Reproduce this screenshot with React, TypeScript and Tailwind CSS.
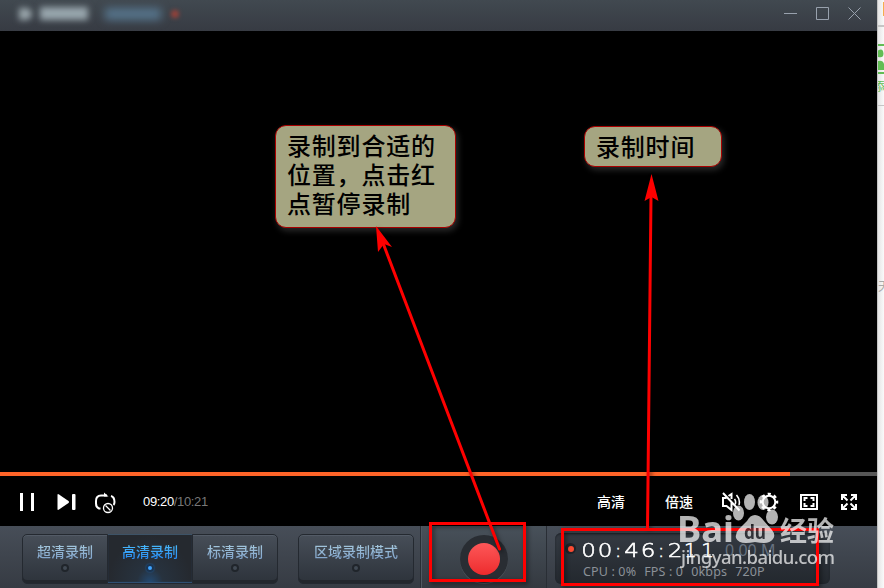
import { ReactNode } from 'react'
import { clsx } from 'clsx'

type ModeButtonProps = {
  label: string
  active?: boolean
  className?: string
}

const ModeButton = ({ label, active, className }: ModeButtonProps) => {
  return (
    <button
      className={clsx(
        'flex h-[50px] flex-col items-center border border-[#242930] pt-[8px] text-[14px] leading-[18px]',
        active
          ? 'border-t-[#3d5367] bg-[radial-gradient(ellipse_at_bottom,#234a73_0%,#27323e_22%,#25292f_70%)] shadow-[inset_0_-1px_1px_#31547a]'
          : 'bg-linear-to-b from-[#474e58] to-[#2d333b] shadow-[inset_0_1px_0_#535b66,inset_0_-3px_0_#23272d]',
        className,
      )}
    >
      <span
        className={clsx(
          'bg-linear-to-b bg-clip-text font-medium text-transparent',
          active
            ? 'from-[#4fc0fb] to-[#2483f2]'
            : 'from-[#a9ccdf] to-[#7c9fc9]',
        )}
      >
        {label}
      </span>
      <span
        className={clsx(
          'mt-[3px] size-[8px] rounded-full border-2',
          active
            ? 'border-[#1b3450] bg-[#3fa4ff] shadow-[0_0_2px_#235f9e]'
            : 'border-[#20252b] bg-[#414a54]',
        )}
      />
    </button>
  )
}

const TitleBar = () => {
  return (
    <header className="flex h-[31px] shrink-0 items-center justify-between bg-linear-to-b from-[#414950] to-[#373b43] pr-[15px] pb-[4px]">
      <div className="flex items-center pl-[19px]">
        <span className="h-[12px] w-[13px] rounded-r-full bg-[#98a4aa] blur-[3px]" />
        <span className="ml-[8px] h-[13px] w-[48px] bg-[#97a5ac] blur-[3px]" />
        <span className="ml-[17px] h-[12px] w-[56px] bg-[#55738a] blur-[4px]" />
        <span className="ml-[10px] size-[8px] rounded-full bg-[#974139] blur-[2px]" />
      </div>
      <svg width="78" height="14" fill="none" stroke="#98a1ad">
        <path d="M0 6.500h13M32.500.500h12v12h-12zM64.500.500l12 12M76.500.500l-12 12" />
      </svg>
    </header>
  )
}

type CalloutProps = {
  children: ReactNode
  className?: string
}

const Callout = ({ children, className }: CalloutProps) => {
  return (
    <div
      className={clsx(
        'absolute rounded-[11px] border border-[#a80000] bg-[#a5a581] pl-[11px] text-[24px] leading-[29px] font-medium tracking-[0.8px] text-black shadow-[2px_3px_6px_#2a2a2a]',
        className,
      )}
    >
      {children}
    </div>
  )
}

const PlayerControls = () => {
  return (
    <div className="flex h-[50px] items-center bg-black px-[20px] pt-[2px] text-white">
      <svg width="14" height="18" fill="currentColor">
        <path d="M0 0h3v18H0zM11 0h3v18h-3z" />
      </svg>
      <svg width="19" height="18" fill="currentColor" className="ml-[23px]">
        <path d="M.5 2Q.5.500 2 1.500l9.500 6.500q1 1 0 2L2 16.500Q.5 17.500.5 16z" />
        <rect x="15" y="1" width="3.500" height="16" rx="1" />
      </svg>
      <svg
        width="22"
        height="22"
        fill="none"
        stroke="currentColor"
        strokeWidth="2"
        className="mt-[2px] ml-[19px]"
      >
        <path d="M5.500 16.500H4q-3-1-3-5V9q0-5.500 5-5.500h6M16 4q3.500 1 3.500 6 0 2-1 3" />
        <path d="M9 .500 13.500 4.500H9z" fill="currentColor" stroke="none" />
        <circle cx="13" cy="16" r="4.500" strokeWidth="1.300" />
        <path d="m10.500 13.500 5 5" strokeWidth="1.300" />
      </svg>
      <span className="ml-[26px] font-['Liberation_Sans'] text-[13px] tracking-[-0.35px]">
        09:20<span className="text-[#777]">/10:21</span>
      </span>

      <div className="ml-auto flex items-center text-[14px]">
        <span className="font-medium">高清</span>
        <span className="ml-[40px] font-medium">倍速</span>
        <svg
          width="19"
          height="20"
          fill="none"
          stroke="currentColor"
          strokeWidth="2"
          className="ml-[29px]"
        >
          <path d="M4.500 6H1v8h3.500l5 4v-8M6.500 4l3-2v5M1 1l16.500 17.500" />
          <path d="M12.500 7q2 2.500.5 5.500M14.500 3q4 4.500 2.500 10" strokeWidth="1.600" />
        </svg>
        <svg
          width="20"
          height="20"
          viewBox="0 0 20 20"
          fill="none"
          stroke="currentColor"
          className="ml-[18px]"
        >
          <circle cx="10" cy="10" r="6.300" strokeWidth="2" />
          <circle
            cx="10"
            cy="10"
            r="8"
            strokeWidth="2.500"
            strokeDasharray="3.142"
            strokeDashoffset="1.571"
          />
        </svg>
        <svg
          width="18"
          height="16"
          fill="none"
          stroke="currentColor"
          strokeWidth="2"
          className="ml-[21px]"
        >
          <path d="M1 1h16v14H1zM4.500 7V4h3M10.500 4h3v3M13.500 9v3h-3M7.500 12h-3V9" />
        </svg>
        <svg
          width="16"
          height="16"
          fill="none"
          stroke="currentColor"
          strokeWidth="2"
          className="ml-[23px]"
        >
          <path d="M1 6V1h5M1 1l5.500 5.500M10 1h5v5M15 1 9.500 6.500M1 10v5h5M1 15l5.500-5.500M15 10v5h-5M15 15 9.500 9.500" />
        </svg>
      </div>
    </div>
  )
}

const RecordStatus = () => {
  return (
    <div className="ml-[8px] flex h-[51px] w-[275px] rounded-[6px] bg-linear-to-b from-[#343a42] to-[#23282e] pl-[10px] font-['Noto_Sans'] shadow-[inset_0_1px_2px_#1d2228]">
      <span className="mt-[10px] flex size-[11px] items-center justify-center rounded-full bg-[#202329]">
        <span className="size-[6px] rounded-full bg-[#fb4b32]" />
      </span>
      <div className="ml-[4px] flex flex-col">
        <div className="flex h-[30px] items-end">
          <div className="flex font-['DejaVu_Sans'] text-[20px] leading-[26px] font-extralight text-white [-webkit-text-stroke:0.6px_#fff]">
            <span className="w-[17px] scale-x-115 text-center">0</span>
            <span className="w-[16px] scale-x-115 text-center">0</span>
            <span className="w-[10px] text-center">:</span>
            <span className="w-[17px] scale-x-115 text-center">4</span>
            <span className="w-[16px] scale-x-115 text-center">6</span>
            <span className="w-[10px] text-center">:</span>
            <span className="w-[18px] scale-x-115 text-center">2</span>
            <span className="w-[10px] text-center">1</span>
            <span className="w-[27px] text-center">1</span>
          </div>
          <span className="ml-[4px] text-[16px] leading-[25px] text-[#66717f]">
            0.00 M
          </span>
        </div>
        <div className="flex gap-[8px] pl-[3px] text-[12.500px] leading-[17px] tracking-[0.15px] text-[#8b9198]">
          <span>CPU : 0%</span>
          <span>FPS : 0</span>
          <span>0kbps</span>
          <span>720P</span>
        </div>
      </div>
    </div>
  )
}

const RecorderBar = () => {
  return (
    <footer className="flex h-[62px] items-start bg-linear-to-b from-[#474e58] to-[#363b43] pl-[22px]">
      <div className="mt-[8px] flex">
        <ModeButton label="超清录制" className="w-[86px] rounded-l-[5px]" />
        <ModeButton label="高清录制" className="w-[84px] border-x-0" active />
        <ModeButton label="标清录制" className="w-[86px] rounded-r-[5px]" />
      </div>
      <ModeButton
        label="区域录制模式"
        className="mt-[8px] ml-[20px] w-[116px] rounded-[5px]"
      />
      <div className="ml-[6px] flex h-full w-[127px] justify-center border-x border-[#292e35] bg-linear-to-b from-[#48515a] to-[#343940] pt-[9px] shadow-[inset_1px_0_0_#505861]">
        <span className="flex size-[48px] items-center justify-center rounded-full bg-[#292d33] shadow-[0_1px_0_#4d545c]">
          <span className="size-[32px] rounded-full bg-linear-to-b from-[#fd5658] to-[#ed292c]" />
        </span>
      </div>
      <div className="pt-[7px]">
        <RecordStatus />
      </div>
    </footer>
  )
}

// strip of the page that stays visible behind the player window
const BackgroundPage = () => {
  return (
    <aside className="flex w-[7px] flex-col overflow-hidden border-l border-[#c4c4c4] bg-linear-to-r from-[#e5e5e5] to-[#fafafa]">
      <div className="flex h-[27px] shrink-0 items-start justify-end border-b-2 border-[#c5c5c5] pt-[2px]">
        <span className="h-[14px] w-px bg-[#f5ad4e]" />
      </div>
      <svg width="6" height="30" fill="#62bd54" className="mt-[17px] shrink-0">
        <path d="M0 0h6v2H0zM0 28h6v2H0zM0 6.500q5-3 5.500 3 0 5-5.500 3.500zM0 17q5-1 6 3v6H0z" />
      </svg>
      <div className="mt-[6px] -ml-[5px] h-[26px] w-[12px] shrink-0 border-b border-[#c5c5c5] text-[12px] leading-[14px] text-[#62bd54]">
        添
      </div>
      <div className="mt-[174px] w-[12px] shrink-0 text-[12px] leading-[14px] text-[#aaa]">
        天
      </div>
    </aside>
  )
}

const Annotations = () => {
  return (
    <svg
      width="884"
      height="588"
      fill="none"
      className="pointer-events-none absolute inset-0"
    >
      <g
        stroke="#f00"
        strokeWidth="3"
        className="drop-shadow-[2px_2px_2px_rgba(0,0,0,0.5)]"
      >
        <rect x="430.500" y="523.500" width="94" height="57" />
        <rect x="562.500" y="529.500" width="255" height="55" />
        <path d="M499.500 549 383 243M647.500 529 651 196" strokeLinecap="round" />
        <path
          d="m376 226 16 21-8-3-6 8zM651.500 174l7 27-7-4-7 4z"
          fill="#f00"
          stroke="none"
        />
      </g>
    </svg>
  )
}

const Watermark = () => {
  return (
    <svg
      width="884"
      height="588"
      fill="#fff"
      className="pointer-events-none absolute inset-0 opacity-70"
    >
      <text
        x="677"
        y="542"
        fontFamily="Noto Sans, sans-serif"
        fontWeight="700"
        fontSize="35"
        textLength="57"
        lengthAdjust="spacingAndGlyphs"
      >
        Bai
      </text>
      <ellipse cx="738.500" cy="513" rx="5.500" ry="7.500" />
      <ellipse cx="749.500" cy="502" rx="5.500" ry="8" />
      <ellipse cx="763" cy="502.500" rx="5.500" ry="7.500" />
      <ellipse cx="772" cy="517" rx="6" ry="7.500" />
      <path d="M755 515q5 0 9 6l8 9q4 5 1 9-3 4-9 4-4 0-9-1-5 1-9 1-8 0-10-5-1-5 3-9l8-8q3-6 8-6z" />
      <text
        x="744"
        y="539"
        fill="#34343a"
        fontFamily="Noto Sans, sans-serif"
        fontWeight="700"
        fontSize="20"
        textLength="22"
        lengthAdjust="spacingAndGlyphs"
      >
        du
      </text>
      <text
        x="780"
        y="541"
        fontFamily="Noto Sans CJK SC, sans-serif"
        fontWeight="700"
        fontSize="27"
        textLength="54"
      >
        经验
      </text>
      <text
        x="681"
        y="564"
        fontFamily="Noto Sans, sans-serif"
        fontSize="18.500"
        fontWeight="500"
        textLength="154"
      >
        jingyan.baidu.com
      </text>
    </svg>
  )
}

export default function App() {
  return (
    <div className="relative flex h-[588px] w-[884px] overflow-hidden bg-black font-['Liberation_Sans','Noto_Sans_CJK_SC',sans-serif]">
      <main className="flex w-[877px] flex-col">
        <TitleBar />
        <section className="flex-1 bg-black">
          <Callout className="top-[125px] left-[275px] h-[103px] w-[181px] pt-[6px]">
            录制到合适的
            <br />
            位置，点击红
            <br />
            点暂停录制
          </Callout>
          <Callout className="top-[126px] left-[584px] h-[41px] w-[138px] pt-[6px]">
            录制时间
          </Callout>
        </section>
        <div className="h-[4px] bg-[#565656]">
          <div className="h-full w-[790px] bg-[#ff6428]" />
        </div>
        <PlayerControls />
        <RecorderBar />
      </main>
      <BackgroundPage />
      <Annotations />
      <Watermark />
    </div>
  )
}
